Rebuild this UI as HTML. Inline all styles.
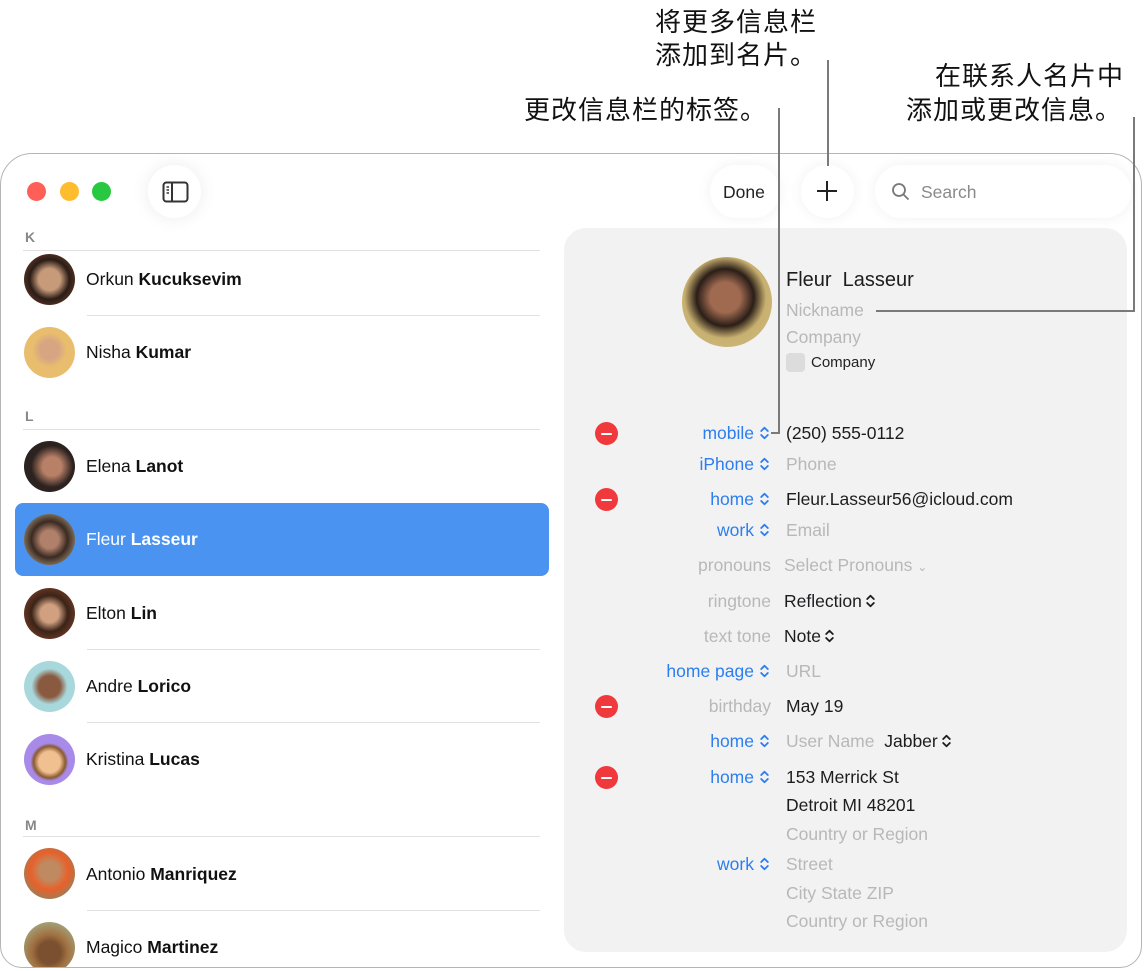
<!DOCTYPE html>
<html><head><meta charset="utf-8"><style>
*{margin:0;padding:0;box-sizing:border-box}
body{width:1146px;height:971px;background:#fff;position:relative;overflow:hidden;font-family:"Liberation Sans","Noto Sans CJK SC",sans-serif;color:#1d1d1f}
.a{position:absolute}
.cn{font-size:26px;letter-spacing:1px;color:#111;line-height:33px;white-space:nowrap;font-family:"Liberation Sans","Noto Sans CJK SC",sans-serif}
.win{position:absolute;left:0px;top:153px;width:1142px;height:815px;border:1.5px solid #b5b5b5;border-radius:32px 32px 22px 22px;background:#fff;overflow:hidden}
.ln{position:absolute;background:#7a7a7a}
.sec{position:absolute;left:24px;font-size:14px;color:#888;font-weight:bold}
.hr{position:absolute;height:1px;background:#e2e2e2}
.av{position:absolute;left:23px;width:51px;height:51px;border-radius:50%}
.nm{position:absolute;left:85px;font-size:17.5px;color:#111;white-space:nowrap}
.lbl{position:absolute;right:372px;font-size:17.5px;color:#2c7ef0;white-space:nowrap;text-align:right}
.lbl.g{color:#b8b8b8;right:370px}
.val{position:absolute;left:785px;font-size:17.5px;color:#1d1d1f;white-space:nowrap}
.ph{color:#b8b8b8}
.minus{position:absolute;left:594px;width:23px;height:23px;border-radius:50%;background:#f0393c}
.minus:after{content:"";position:absolute;left:6px;top:10.5px;width:11px;height:2.2px;background:#fff;border-radius:1px}
.ch{display:inline-block;width:9px;height:14px;margin-left:6px;vertical-align:-1px}
</style></head><body>
<svg width="0" height="0" style="position:absolute"><defs><symbol id="c" viewBox="0 0 9 14"><path d="M1.2 5 L4.5 1.7 L7.8 5 M1.2 9 L4.5 12.3 L7.8 9" fill="none" stroke="currentColor" stroke-width="1.8" stroke-linecap="round" stroke-linejoin="round"/></symbol></defs></svg>
<div class="a cn" style="left:655px;top:6px">将更多信息栏</div>
<div class="a cn" style="left:655px;top:39px">添加到名片。</div>
<div class="a cn" style="left:524px;top:94px">更改信息栏的标签。</div>
<div class="a cn" style="left:935px;top:60px">在联系人名片中</div>
<div class="a cn" style="left:906px;top:94px">添加或更改信息。</div>

<div class="win">
 <div class="a" style="left:26px;top:28px;width:19px;height:19px;border-radius:50%;background:#fe5f57"></div>
 <div class="a" style="left:59px;top:28px;width:19px;height:19px;border-radius:50%;background:#febc2e"></div>
 <div class="a" style="left:91px;top:28px;width:19px;height:19px;border-radius:50%;background:#28c840"></div>
 <div class="a" style="left:147px;top:11px;width:53px;height:53px;border-radius:50%;background:#fff;box-shadow:0 0 18px rgba(0,0,0,.08)"></div>
 <svg class="a" style="left:161px;top:27px" width="27" height="22" viewBox="0 0 27 22"><rect x="1.5" y="1.5" width="24" height="19" rx="3" fill="none" stroke="#333" stroke-width="2"/><line x1="10" y1="2" x2="10" y2="20" stroke="#333" stroke-width="2"/><line x1="4.5" y1="6" x2="7" y2="6" stroke="#333" stroke-width="1.5"/><line x1="4.5" y1="9" x2="7" y2="9" stroke="#333" stroke-width="1.5"/><line x1="4.5" y1="12" x2="7" y2="12" stroke="#333" stroke-width="1.5"/></svg>
 <div class="a" style="left:709px;top:11px;width:70px;height:53px;border-radius:27px;background:#fff;box-shadow:0 0 14px rgba(0,0,0,.06)"></div>
 <div class="a" style="left:722px;top:28px;font-size:17.5px;color:#222">Done</div>
 <div class="a" style="left:800px;top:11px;width:53px;height:53px;border-radius:50%;background:#fff;box-shadow:0 0 14px rgba(0,0,0,.06)"></div>
 <div class="a" style="left:816px;top:36px;width:20px;height:2px;background:#222"></div>
 <div class="a" style="left:825px;top:27px;width:2px;height:20px;background:#222"></div>
 <div class="a" style="left:874px;top:11px;width:256px;height:53px;border-radius:27px;background:#fff;box-shadow:0 0 14px rgba(0,0,0,.06)"></div>
 <svg class="a" style="left:890px;top:28px" width="20" height="20" viewBox="0 0 20 20"><circle cx="8" cy="8" r="6" fill="none" stroke="#777" stroke-width="1.8"/><line x1="12.5" y1="12.5" x2="17.5" y2="17.5" stroke="#777" stroke-width="1.8"/></svg>
 <div class="a" style="left:920px;top:28px;font-size:17.5px;color:#8a8a8a">Search</div>

 <div class="sec" style="top:75px">K</div>
 <div class="hr" style="left:22px;width:517px;top:96px"></div>
 <div class="av" style="top:100px;background:radial-gradient(circle at 50% 50%,#c79a7a 30%,#2b1d17 55%,#8a4a30)"></div>
 <div class="nm" style="top:115px">Orkun <b>Kucuksevim</b></div>
 <div class="hr" style="left:86px;width:453px;top:161px"></div>
 <div class="av" style="top:173px;background:radial-gradient(circle at 50% 45%,#d8a583 25%,#e9bd6e 45%)"></div>
 <div class="nm" style="top:188px">Nisha <b>Kumar</b></div>
 <div class="sec" style="top:254px">L</div>
 <div class="hr" style="left:22px;width:517px;top:275px"></div>
 <div class="av" style="top:287px;background:radial-gradient(circle at 55% 50%,#b88066 25%,#2c2220 55%)"></div>
 <div class="nm" style="top:302px">Elena <b>Lanot</b></div>
 <div class="a" style="left:14px;top:349px;width:534px;height:73px;border-radius:8px;background:#4a93f0"></div>
 <div class="av" style="top:360px;background:radial-gradient(circle at 50% 50%,#b0806a 25%,#3a2a22 50%,#d8c49a)"></div>
 <div class="nm" style="top:375px;color:#fff">Fleur <b>Lasseur</b></div>
 <div class="av" style="top:434px;background:radial-gradient(circle at 50% 50%,#d0a080 25%,#3a2418 50%,#9a4a30)"></div>
 <div class="nm" style="top:449px">Elton <b>Lin</b></div>
 <div class="hr" style="left:86px;width:453px;top:495px"></div>
 <div class="av" style="top:507px;background:radial-gradient(circle at 50% 50%,#8a5a40 30%,#a8d8dc 50%)"></div>
 <div class="nm" style="top:522px">Andre <b>Lorico</b></div>
 <div class="hr" style="left:86px;width:453px;top:568px"></div>
 <div class="av" style="top:580px;background:radial-gradient(circle at 50% 55%,#f0c090 28%,#8a5a30 42%,#a88ae8 50%)"></div>
 <div class="nm" style="top:595px">Kristina <b>Lucas</b></div>
 <div class="sec" style="top:663px">M</div>
 <div class="hr" style="left:22px;width:517px;top:682px"></div>
 <div class="av" style="top:694px;background:radial-gradient(circle at 50% 45%,#c08a60 25%,#e8602a 50%,#5a9a80)"></div>
 <div class="nm" style="top:710px">Antonio <b>Manriquez</b></div>
 <div class="hr" style="left:86px;width:453px;top:756px"></div>
 <div class="av" style="top:768px;background:radial-gradient(circle at 50% 60%,#7a5030 28%,#a07040 45%,#a8c4a0)"></div>
 <div class="nm" style="top:783px">Magico <b>Martinez</b></div>

 <div class="a" style="left:563px;top:74px;width:563px;height:724px;border-radius:22px;background:#f2f2f2"></div>
 <div class="a" style="left:681px;top:103px;width:90px;height:90px;border-radius:50%;background:radial-gradient(circle at 48% 45%,#a06a50 22%,#2a1e18 42%,#c8b070 60%,#d0bc80)"></div>
 <div class="a" style="left:785px;top:115px;font-size:20px;color:#1d1d1f">Fleur&nbsp; Lasseur</div>
 <div class="a ph" style="left:785px;top:146px;font-size:17.5px">Nickname</div>
 <div class="a ph" style="left:785px;top:173px;font-size:17.5px">Company</div>
 <div class="a" style="left:785px;top:199px;width:19px;height:19px;border-radius:4px;background:#dcdcdc"></div>
 <div class="a" style="left:810px;top:200px;font-size:15px;color:#222">Company</div>

 <div class="minus" style="top:268px"></div>
 <div class="lbl" style="top:269px">mobile<svg class="ch"><use href="#c"/></svg></div>
 <div class="val" style="top:269px">(250) 555-0112</div>
 <div class="lbl" style="top:300px">iPhone<svg class="ch"><use href="#c"/></svg></div>
 <div class="val ph" style="top:300px">Phone</div>
 <div class="minus" style="top:334px"></div>
 <div class="lbl" style="top:335px">home<svg class="ch"><use href="#c"/></svg></div>
 <div class="val" style="top:335px">Fleur.Lasseur56@icloud.com</div>
 <div class="lbl" style="top:366px">work<svg class="ch"><use href="#c"/></svg></div>
 <div class="val ph" style="top:366px">Email</div>
 <div class="lbl g" style="top:401px">pronouns</div>
 <div class="val ph" style="top:401px;left:783px">Select Pronouns <span style="font-size:12px">⌄</span></div>
 <div class="lbl g" style="top:437px">ringtone</div>
 <div class="val" style="top:437px;left:783px">Reflection<svg class="ch" style="margin-left:4px"><use href="#c"/></svg></div>
 <div class="lbl g" style="top:472px">text tone</div>
 <div class="val" style="top:472px;left:783px">Note<svg class="ch" style="margin-left:4px"><use href="#c"/></svg></div>
 <div class="lbl" style="top:507px">home page<svg class="ch"><use href="#c"/></svg></div>
 <div class="val ph" style="top:507px">URL</div>
 <div class="minus" style="top:541px"></div>
 <div class="lbl g" style="top:542px">birthday</div>
 <div class="val" style="top:542px">May 19</div>
 <div class="lbl" style="top:577px">home<svg class="ch"><use href="#c"/></svg></div>
 <div class="val" style="top:577px"><span class="ph">User Name</span>&nbsp; Jabber<svg class="ch" style="margin-left:4px"><use href="#c"/></svg></div>
 <div class="minus" style="top:612px"></div>
 <div class="lbl" style="top:613px">home<svg class="ch"><use href="#c"/></svg></div>
 <div class="val" style="top:613px">153 Merrick St</div>
 <div class="val" style="top:641px">Detroit MI 48201</div>
 <div class="val ph" style="top:670px">Country or Region</div>
 <div class="lbl" style="top:700px">work<svg class="ch"><use href="#c"/></svg></div>
 <div class="val ph" style="top:700px">Street</div>
 <div class="val ph" style="top:729px">City State ZIP</div>
 <div class="val ph" style="top:757px">Country or Region</div>
</div>

<div class="ln" style="left:778px;top:108px;width:2px;height:326px"></div>
<div class="ln" style="left:771px;top:432px;width:9px;height:2px"></div>
<div class="ln" style="left:827px;top:60px;width:2px;height:106px"></div>
<div class="ln" style="left:1133px;top:117px;width:2px;height:195px"></div>
<div class="ln" style="left:876px;top:310px;width:259px;height:2px"></div>
</body></html>
